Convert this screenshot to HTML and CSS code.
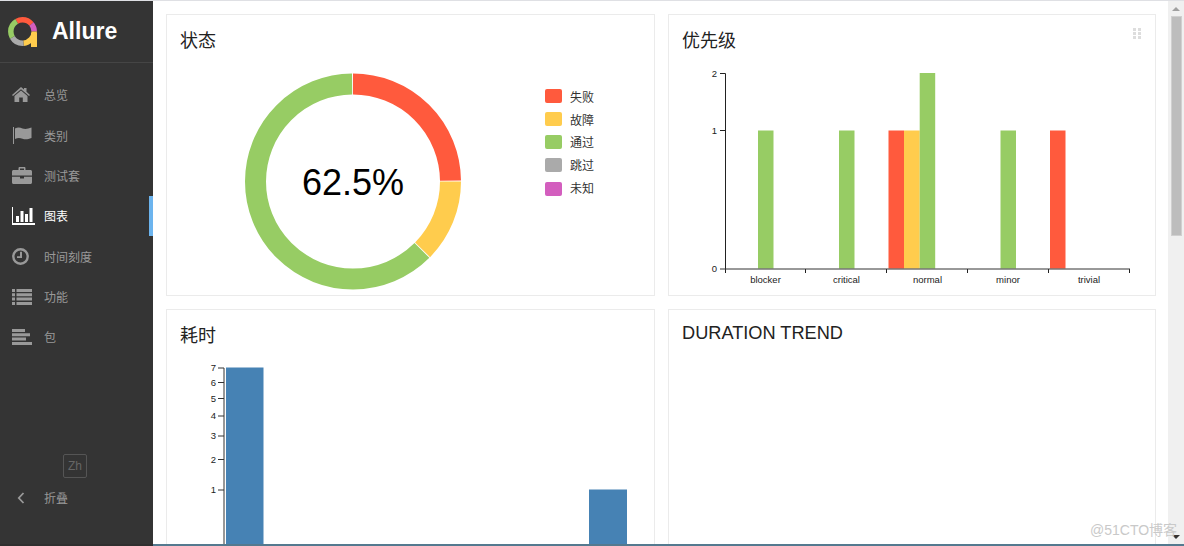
FILE: index.html
```html
<!DOCTYPE html>
<html lang="zh">
<head>
  <meta charset="UTF-8" />
  <meta name="viewport" content="width=device-width, initial-scale=1.0" />
  <title>Allure</title>
  <link rel="stylesheet" href="styles.css">
</head>
<body>
  <div class="top-line"></div>

  <div class="app">
    <!-- Sidebar -->
    <aside class="side-nav">
      <div class="brand">
        <svg class="brand-logo" width="30" height="30" viewBox="0 0 30 30">
          <g fill="none" stroke-width="5.5" transform="rotate(-90 14.5 14.5)">
            <circle cx="14.5" cy="14.5" r="11.7" pathLength="360" stroke="#ff5a3d" stroke-dasharray="80 280" stroke-dashoffset="30"/>
            <circle cx="14.5" cy="14.5" r="11.7" pathLength="360" stroke="#d35ebe" stroke-dasharray="40 320" stroke-dashoffset="-50"/>
            <circle cx="14.5" cy="14.5" r="11.7" pathLength="360" stroke="#ffcc4d" stroke-dasharray="85 275" stroke-dashoffset="-90"/>
            <circle cx="14.5" cy="14.5" r="11.7" pathLength="360" stroke="#aaaaaa" stroke-dasharray="65 295" stroke-dashoffset="-175"/>
            <circle cx="14.5" cy="14.5" r="11.7" pathLength="360" stroke="#97cc64" stroke-dasharray="90 270" stroke-dashoffset="-240"/>
          </g>
          <rect x="23" y="16" width="6" height="14" fill="#ffcc4d"/>
        </svg>
        <span class="brand-name">Allure</span>
      </div>

      <ul class="nav-list">
        <li class="nav-item">
          <span class="nav-icon">
            <svg width="18" height="15" viewBox="0 0 18 15"><path d="M9 0 L12 2.6 V1 H14.5 V4.8 L18 7.9 L17 9 L9 2.2 L1 9 L0 7.9 Z M9 3.6 L15.5 9 V15 H10.8 V10.5 H7.2 V15 H2.5 V9 Z" fill="currentColor"/></svg>
          </span>
          <span>总览</span>
        </li>
        <li class="nav-item">
          <span class="nav-icon">
            <svg width="20" height="17" viewBox="0 0 20 17"><path d="M1 0 V17 H2 V0 Z M3 1.5 C6 0 8 0.5 10.5 1.5 C13 2.4 16 2 19.5 0.6 V11 C16 12.5 13 12.7 10.5 11.8 C8 10.9 6 10.6 3 12 Z" fill="currentColor"/></svg>
          </span>
          <span>类别</span>
        </li>
        <li class="nav-item">
          <span class="nav-icon">
            <svg width="20" height="17" viewBox="0 0 20 17"><path d="M6.5 3 V1.2 C6.5 .5 7 0 7.7 0 H12.3 C13 0 13.5 .5 13.5 1.2 V3 H18.5 C19.3 3 20 3.7 20 4.5 V8.5 H0 V4.5 C0 3.7 .7 3 1.5 3 Z M8 3 H12 V1.5 H8 Z M0 9.7 H8 V11.5 H12 V9.7 H20 V15.5 C20 16.3 19.3 17 18.5 17 H1.5 C.7 17 0 16.3 0 15.5 Z" fill="currentColor" fill-rule="evenodd"/></svg>
          </span>
          <span>测试套</span>
        </li>
        <li class="nav-item is-active">
          <span class="nav-icon">
            <svg width="23" height="18" viewBox="0 0 23 18"><path d="M0 0 H1 V16 H23 V18 H0 Z M4 9 H7 V15 H4 Z M8.5 4 H11.5 V15 H8.5 Z M13 7 H16 V15 H13 Z M17.5 1 H20.5 V15 H17.5 Z" fill="currentColor"/></svg>
          </span>
          <span>图表</span>
        </li>
        <li class="nav-item">
          <span class="nav-icon">
            <svg width="17" height="17" viewBox="0 0 17 17"><circle cx="8.5" cy="8.5" r="7.2" fill="none" stroke="currentColor" stroke-width="2.4"/><path d="M8 3.8 H10 V10 H5 V8.2 H8 Z" fill="currentColor"/></svg>
          </span>
          <span>时间刻度</span>
        </li>
        <li class="nav-item">
          <span class="nav-icon">
            <svg width="20" height="16" viewBox="0 0 20 16"><path d="M0 0 H3 V3 H0 Z M4.500 0 H20 V3 H4.500 Z M0 4.300 H3 V7.300 H0 Z M4.500 4.300 H20 V7.300 H4.500 Z M0 8.600 H3 V11.600 H0 Z M4.500 8.600 H20 V11.600 H4.500 Z M0 13 H3 V16 H0 Z M4.500 13 H20 V16 H4.500 Z" fill="currentColor"/></svg>
          </span>
          <span>功能</span>
        </li>
        <li class="nav-item">
          <span class="nav-icon">
            <svg width="20" height="16" viewBox="0 0 20 16"><path d="M0 0 H13 V3 H0 Z M0 4.300 H18 V7.300 H0 Z M0 8.600 H14 V11.600 H0 Z M0 13 H20 V16 H0 Z" fill="currentColor"/></svg>
          </span>
          <span>包</span>
        </li>
      </ul>

      <div class="side-bottom">
        <div class="lang-btn">Zh</div>
        <div class="nav-item collapse-row">
          <span class="nav-icon">
            <svg class="chevron" width="8" height="12" viewBox="0 0 8 12"><path d="M6.500 1 L1.800 6 L6.500 11" fill="none" stroke="currentColor" stroke-width="1.800"/></svg>
          </span>
          <span>折叠</span>
        </div>
      </div>
    </aside>

    <!-- Widgets -->
    <main class="widgets">
      <section class="widget">
        <h2 class="widget-title">状态</h2>
        <svg class="chart" width="487" height="236" viewBox="167 60 487 236">
          <g fill="none" stroke-width="21" transform="rotate(-90 353 181.500)">
            <circle cx="353" cy="181.500" r="97.500" pathLength="100" stroke="#ff5a3d" stroke-dasharray="24.850 75.150"/>
            <circle cx="353" cy="181.500" r="97.500" pathLength="100" stroke="#ffcc4d" stroke-dasharray="12.350 87.650" stroke-dashoffset="-25"/>
            <circle cx="353" cy="181.500" r="97.500" pathLength="100" stroke="#97cc64" stroke-dasharray="62.350 37.650" stroke-dashoffset="-37.500"/>
          </g>
          <text class="donut-value" x="353" y="195" text-anchor="middle">62.5%</text>

          <rect x="545" y="89" width="17" height="14" rx="2" fill="#ff5a3d"/>
          <text class="legend-text" x="570" y="102">失败</text>
          <rect x="545" y="112" width="17" height="14" rx="2" fill="#ffcc4d"/>
          <text class="legend-text" x="570" y="125">故障</text>
          <rect x="545" y="135" width="17" height="14" rx="2" fill="#97cc64"/>
          <text class="legend-text" x="570" y="147">通过</text>
          <rect x="545" y="158" width="17" height="14" rx="2" fill="#aaaaaa"/>
          <text class="legend-text" x="570" y="170">跳过</text>
          <rect x="545" y="182" width="17" height="14" rx="2" fill="#d35ebe"/>
          <text class="legend-text" x="570" y="193">未知</text>
        </svg>
      </section>

      <section class="widget">
        <div class="drag-handle">
          <i></i><i></i><i></i><i></i><i></i><i></i>
        </div>
        <h2 class="widget-title">优先级</h2>
        <svg class="chart" width="486" height="236" viewBox="669 60 486 236">
          <rect x="758" y="130.500" width="15.500" height="138" fill="#97cc64"/>
          <rect x="839" y="130.500" width="15.500" height="138" fill="#97cc64"/>
          <rect x="888.500" y="130.500" width="15.500" height="138" fill="#ff5a3d"/>
          <rect x="904" y="130.500" width="15.700" height="138" fill="#ffcc4d"/>
          <rect x="919.700" y="73" width="15.500" height="195.500" fill="#97cc64"/>
          <rect x="1000.500" y="130.500" width="15.500" height="138" fill="#97cc64"/>
          <rect x="1050" y="130.500" width="15.500" height="138" fill="#ff5a3d"/>

          <path class="axis" d="M720 73.500 H725.500 V269 M720 130.500 H725.500 M725.500 269 V273 M805.500 269 V273 M886.500 269 V273 M967.500 269 V273 M1048.500 269 V273 M1129.500 269 V273"/>
          <path class="axis-thick" d="M720 269 H1130"/>

          <text class="tick-label" x="717" y="77" text-anchor="end">2</text>
          <text class="tick-label" x="717" y="134" text-anchor="end">1</text>
          <text class="tick-label" x="717" y="272" text-anchor="end">0</text>
          <text class="tick-label" x="765.500" y="283" text-anchor="middle">blocker</text>
          <text class="tick-label" x="846.500" y="283" text-anchor="middle">critical</text>
          <text class="tick-label" x="927.500" y="283" text-anchor="middle">normal</text>
          <text class="tick-label" x="1008" y="283" text-anchor="middle">minor</text>
          <text class="tick-label" x="1089" y="283" text-anchor="middle">trivial</text>
        </svg>
      </section>

      <section class="widget">
        <h2 class="widget-title">耗时</h2>
        <svg class="chart" width="487" height="236" viewBox="167 355 487 236">
          <rect x="226" y="367.500" width="37.500" height="230" fill="#4682b4"/>
          <rect x="589" y="489.500" width="38" height="110" fill="#4682b4"/>
          <path class="axis-thick" d="M218 368 H224 V600 M218 382.500 H224 M218 398.500 H224 M218 416 H224 M218 436 H224 M218 459.500 H224 M218 490 H224"/>
          <text class="tick-label" x="216" y="371" text-anchor="end">7</text>
          <text class="tick-label" x="216" y="386" text-anchor="end">6</text>
          <text class="tick-label" x="216" y="402" text-anchor="end">5</text>
          <text class="tick-label" x="216" y="419" text-anchor="end">4</text>
          <text class="tick-label" x="216" y="439" text-anchor="end">3</text>
          <text class="tick-label" x="216" y="463" text-anchor="end">2</text>
          <text class="tick-label" x="216" y="493" text-anchor="end">1</text>
        </svg>
      </section>

      <section class="widget">
        <h2 class="widget-title title-latin">DURATION TREND</h2>
      </section>
    </main>

    <!-- Browser scrollbar -->
    <div class="scrollbar">
      <span class="arrow-up"></span>
      <div class="scroll-thumb"></div>
      <span class="arrow-down"></span>
    </div>
  </div>

  <div class="bottom-line"></div>
  <div class="watermark">@51CTO博客</div>
</body>
</html>
```

FILE: styles.css
```css
/* Base styling */
html, body {
  height: 100%;
}
body {
  margin: 0;
  display: flex;
  flex-direction: column;
  overflow: hidden;
  background: #fff;
  font-family: "Liberation Sans", "Noto Sans CJK SC", sans-serif;
}
.top-line {
  height: 1px;
  background: #dfe0e4;
}
.bottom-line {
  height: 2px;
  background: linear-gradient(to right, #2f2f2f 153px, #54798f 153px);
}
.app {
  flex: 1;
  display: flex;
  min-height: 0;
}
/* Sidebar */
.side-nav {
  width: 153px;
  flex-shrink: 0;
  display: flex;
  flex-direction: column;
  background: #343434;
  color: #999;
}
.brand {
  height: 61px;
  display: flex;
  align-items: center;
  gap: 14px;
  padding-left: 8px;
  border-bottom: 1px solid #454545;
}
.brand-name {
  color: #fff;
  font-size: 23px;
  font-weight: bold;
}
.nav-list {
  list-style: none;
  margin: 12px 0 0;
  padding: 0;
}
.nav-item {
  height: 40.33px;
  display: flex;
  align-items: center;
  padding: 0 0 0.4px 12px;
  font-size: 12px;
  box-sizing: border-box;
}
.nav-item.is-active {
  color: #fff;
  border-right: 4px solid #6cb4ee;
}
.nav-icon {
  width: 32px;
  flex-shrink: 0;
  display: flex;
  align-items: center;
}
.chevron {
  margin-left: 5px;
}
.side-bottom {
  margin-top: auto;
  padding-bottom: 26px;
}
.lang-btn {
  width: 24px;
  height: 24px;
  margin-left: 63px;
  border: 1px solid #555;
  border-radius: 2px;
  box-sizing: border-box;
  color: #666;
  font-size: 12px;
  line-height: 22px;
  text-align: center;
}
/* Widget grid */
.widgets {
  flex: 1;
  min-width: 0;
  overflow: hidden;
  display: grid;
  grid-template-columns: 489px 488px;
  grid-template-rows: 282px 282px;
  gap: 13px;
  padding: 13px 12px 0 13px;
  box-sizing: border-box;
}
.widget {
  position: relative;
  border: 1px solid #ebebeb;
  overflow: hidden;
}
.widget-title {
  height: 45px;
  margin: 0;
  padding-left: 13px;
  color: #222;
  font-size: 18px;
  font-weight: normal;
  line-height: 53px;
  box-sizing: border-box;
}
.title-latin {
  font-size: 18.2px;
  line-height: 47px;
}
.chart {
  display: block;
}
/* Drag dots in the corner */
.drag-handle {
  position: absolute;
  top: 13px;
  right: 14px;
  display: grid;
  grid-template-columns: 3px 3px;
  gap: 1px 2px;
}
.drag-handle i {
  width: 3px;
  height: 3px;
  background: #ddd;
}
/* Chart text */
.donut-value {
  font-size: 36px;
  fill: #000;
}
.legend-text {
  font-size: 12px;
  fill: #333;
}
.tick-label {
  font-size: 9.5px;
  fill: #222;
}
.axis {
  fill: none;
  stroke: #222;
  stroke-width: 1;
}
.axis-thick {
  fill: none;
  stroke: #333;
  stroke-width: 1;
}
/* Scrollbar */
.scrollbar {
  width: 16px;
  flex-shrink: 0;
  display: flex;
  flex-direction: column;
  align-items: center;
  background: #f0f0f0;
}
.arrow-up {
  margin-top: 6px;
  border: 4px solid transparent;
  border-top: 0;
  border-bottom-color: #a0a0a0;
}
.scroll-thumb {
  width: 11px;
  height: 220px;
  margin: 5px 0 0 1px;
  background: #bdbdbd;
  border: 1px solid #d0d0d0;
  box-sizing: border-box;
}
.arrow-down {
  margin-top: auto;
  margin-bottom: 5px;
  border: 4px solid transparent;
  border-bottom: 0;
  border-top-color: #333;
}
/* Watermark on top of everything */
.watermark {
  position: absolute;
  left: 1090px;
  top: 519px;
  color: #c9c9c9;
  font-size: 14px;
}
```
